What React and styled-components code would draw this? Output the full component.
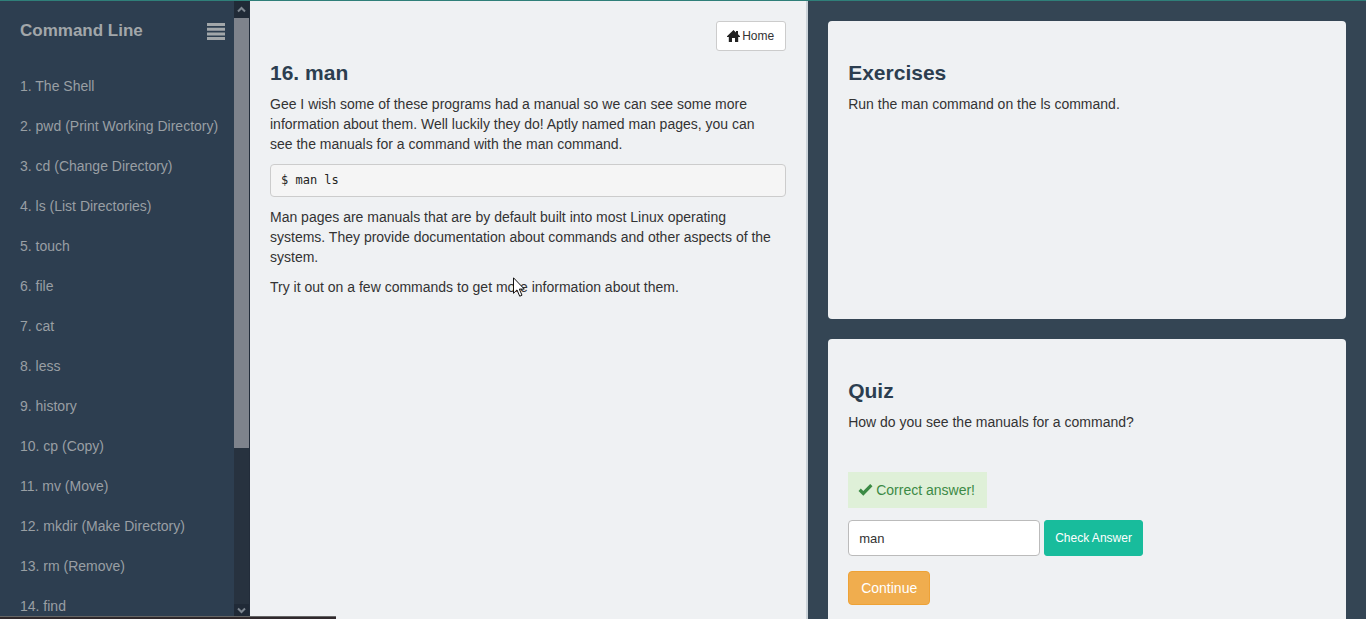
import React, { useState } from "react";
import styled, { createGlobalStyle } from "styled-components";

const lessons = [
  "The Shell",
  "pwd (Print Working Directory)",
  "cd (Change Directory)",
  "ls (List Directories)",
  "touch",
  "file",
  "cat",
  "less",
  "history",
  "cp (Copy)",
  "mv (Move)",
  "mkdir (Make Directory)",
  "rm (Remove)",
  "find",
];

const GlobalStyle = createGlobalStyle`
  *, *::before, *::after { box-sizing: border-box; }
  body {
    margin: 0;
    overflow: hidden;
    color: #333;
    background: #34495e;
    font: 14px/20px "Liberation Sans", Arial, sans-serif;
  }
  button, input { font-family: inherit; }
`;

const Page = styled.div`
  display: flex;
  height: 100vh;
  overflow: hidden;
  border-top: 1px solid #2f7f79;
`;

const Sidebar = styled.aside`
  display: flex;
  flex: 0 0 250px;
  background: #2d3e50;
  border-right: 1px solid #222c3a;
`;

const SidebarBody = styled.div`
  flex: 1;
  min-width: 0;
  overflow: hidden;
  color: #a2a7aa;
`;

const SidebarHeader = styled.header`
  display: flex;
  align-items: center;
  justify-content: space-between;
  height: 60px;
  padding: 0 9px 0 20px;
`;

const SidebarTitle = styled.h1`
  margin: 0;
  font-size: 17px;
  line-height: 20px;
  font-weight: bold;
`;

const MenuButton = styled.button`
  display: flex;
  padding: 0;
  border: 0;
  color: #a2a7aa;
  background: none;
`;

const LessonList = styled.ol`
  margin: 0;
  padding: 5px 0 0;
  list-style: none;
`;

const LessonLink = styled.a`
  display: block;
  padding: 0 0 0 20px;
  line-height: 40px;
  white-space: nowrap;
  color: #999fa4;
  text-decoration: none;
`;

const ScrollTrack = styled.div`
  display: flex;
  flex: 0 0 15px;
  flex-direction: column;
  margin-bottom: 3px;
  background: #27323f;
`;

const ScrollArrow = styled.button`
  display: flex;
  align-items: center;
  justify-content: center;
  flex: 0 0 ${(p) => (p.$end ? 12 : 17)}px;
  padding: 0;
  border: 0;
  color: #7e8791;
  background: #202a37;
`;

const ScrollRail = styled.div`
  flex: 1;
`;

const ScrollThumb = styled.div`
  height: 73.4%;
  background: #7e838c;
`;

const Lesson = styled.main`
  flex: 1 1 50%;
  min-width: 0;
  padding: 20px;
  background: #eff1f3;
  border-right: 2px solid #cbd3d9;
`;

const Toolbar = styled.div`
  display: flex;
  justify-content: flex-end;
`;

const HomeButton = styled.a`
  display: flex;
  align-items: center;
  gap: 2px;
  height: 30px;
  padding: 0 11px 0 10px;
  border: 1px solid #ccc;
  border-radius: 3px;
  color: #333;
  background: #fff;
  font-size: 12px;
  line-height: 18px;
  text-decoration: none;
`;

const Heading = styled.h2`
  margin: 10px 0;
  color: #2c3e50;
  font-size: 21px;
  line-height: 23px;
  font-weight: bold;
`;

const Paragraph = styled.p`
  margin: 0 0 10px;
  padding-right: 8px;
`;

const CodeBlock = styled.pre`
  margin: 0 0 10px;
  padding: 6px 10px;
  border: 1px solid #ccc;
  border-radius: 4px;
  color: #222;
  background: #f5f5f5;
  font: 12px/19px "DejaVu Sans Mono", monospace;
`;

const Practice = styled.section`
  display: flex;
  flex: 1 1 50%;
  flex-direction: column;
  gap: 20px;
  min-width: 0;
  padding: 20px;
  background: #344554;
`;

const Card = styled.section`
  flex: 0 0 298px;
  padding: 30px 20px;
  border-radius: 4px;
  background: #eff1f3;
`;

const QuizForm = styled.form`
  display: flex;
  flex-direction: column;
  align-items: flex-start;
  padding-top: 40px;
`;

const Feedback = styled.output`
  display: flex;
  align-items: center;
  gap: 3px;
  height: 36px;
  padding: 0 12px 0 10px;
  color: #3c8a45;
  background: #dff0d8;
`;

const AnswerRow = styled.div`
  display: flex;
  gap: 4px;
  margin: 12px 0 15px;
`;

const AnswerInput = styled.input`
  width: 192px;
  height: 36px;
  padding: 0 10px;
  border: 1px solid #bbb;
  border-radius: 4px;
  color: #333;
  background: #fff;
  font-size: 13px;
`;

const ActionButton = styled.button`
  height: ${(p) => (p.$small ? 36 : 34)}px;
  padding: 0 ${(p) => (p.$small ? 10 : 12)}px;
  border: 1px solid ${(p) => (p.$small ? "#18bc9c" : "#eea236")};
  border-radius: ${(p) => (p.$small ? 3 : 4)}px;
  color: #fff;
  background: ${(p) => (p.$small ? "#18bc9c" : "#f0ad4e")};
  font-size: ${(p) => (p.$small ? 12 : 14)}px;
`;

const StatusEdge = styled.div`
  position: absolute;
  bottom: 0;
  left: 0;
  width: 336px;
  height: 3px;
  border-top: 1px solid #666;
  background: #30292c;
`;

const Pointer = styled.svg`
  position: absolute;
  top: 277px;
  left: 513px;
  pointer-events: none;
`;

const Chevron = ({ down }) => (
  <svg width="9" height="7" viewBox="0 0 9 7" fill="none" stroke="currentColor" strokeWidth="2">
    <path d={down ? "M1 1.5 4.5 5 8 1.5" : "M1 5.5 4.5 2 8 5.5"} />
  </svg>
);

export default function App() {
  const [answer, setAnswer] = useState("man");
  return (
    <>
      <GlobalStyle />
      <Page>
        <Sidebar>
          <SidebarBody>
            <SidebarHeader>
              <SidebarTitle>Command Line</SidebarTitle>
              <MenuButton type="button" aria-label="Toggle menu">
                <svg width="18" height="17" viewBox="0 0 18 17" fill="currentColor">
                  <path d="M0 0h18v3H0zM0 4.700h18v3H0zM0 9.400h18v3H0zM0 14h18v3H0z" />
                </svg>
              </MenuButton>
            </SidebarHeader>
            <nav aria-label="Lessons">
              <LessonList>
                {lessons.map((name, i) => (
                  <li key={name}>
                    <LessonLink href={`#lesson-${i + 1}`}>{`${i + 1}. ${name}`}</LessonLink>
                  </li>
                ))}
              </LessonList>
            </nav>
          </SidebarBody>
          <ScrollTrack>
            <ScrollArrow type="button" aria-label="Scroll up"><Chevron /></ScrollArrow>
            <ScrollRail><ScrollThumb /></ScrollRail>
            <ScrollArrow type="button" aria-label="Scroll down" $end><Chevron down /></ScrollArrow>
          </ScrollTrack>
        </Sidebar>

        <Lesson>
          <Toolbar>
            <HomeButton href="#home">
              <svg width="13" height="12" viewBox="0 0 13 12" fill="#222" aria-hidden="true">
                <path d="M6.500 0 9 2.400V1h2v3.300L13 6.300V7h-1.800V12H8V8H5v4H1.800V7H0V6.300z" />
              </svg>
              Home
            </HomeButton>
          </Toolbar>
          <Heading>16. man</Heading>
          <Paragraph>
            Gee I wish some of these programs had a manual so we can see some more information
            about them. Well luckily they do! Aptly named man pages, you can see the manuals for a
            command with the man command.
          </Paragraph>
          <CodeBlock>$ man ls</CodeBlock>
          <Paragraph>
            Man pages are manuals that are by default built into most Linux operating systems. They
            provide documentation about commands and other aspects of the system.
          </Paragraph>
          <Paragraph>Try it out on a few commands to get more information about them.</Paragraph>
        </Lesson>

        <Practice>
          <Card>
            <Heading>Exercises</Heading>
            <Paragraph>Run the man command on the ls command.</Paragraph>
          </Card>
          <Card>
            <Heading>Quiz</Heading>
            <Paragraph as="label" htmlFor="answer">How do you see the manuals for a command?</Paragraph>
            <QuizForm onSubmit={(e) => e.preventDefault()}>
              <Feedback htmlFor="answer">
                <svg width="15" height="12" viewBox="0 0 15 12" fill="currentColor" aria-hidden="true">
                  <path d="M12.200 0 14.500 2.200 5.300 11.700 0.500 7 2.800 4.600 5.300 7z" />
                </svg>
                Correct answer!
              </Feedback>
              <AnswerRow>
                <AnswerInput id="answer" value={answer} onChange={(e) => setAnswer(e.target.value)} />
                <ActionButton type="submit" $small>Check Answer</ActionButton>
              </AnswerRow>
              <ActionButton type="button">Continue</ActionButton>
            </QuizForm>
          </Card>
        </Practice>
      </Page>
      <StatusEdge />
      <Pointer width="12" height="21" viewBox="0 0 12 21" fill="#fff" stroke="#111" aria-hidden="true">
        <path d="M.5.8v15.500l3.500-3.400 2.700 6.300 2.300-1-2.700-6.100h5z" />
      </Pointer>
    </>
  );
}
